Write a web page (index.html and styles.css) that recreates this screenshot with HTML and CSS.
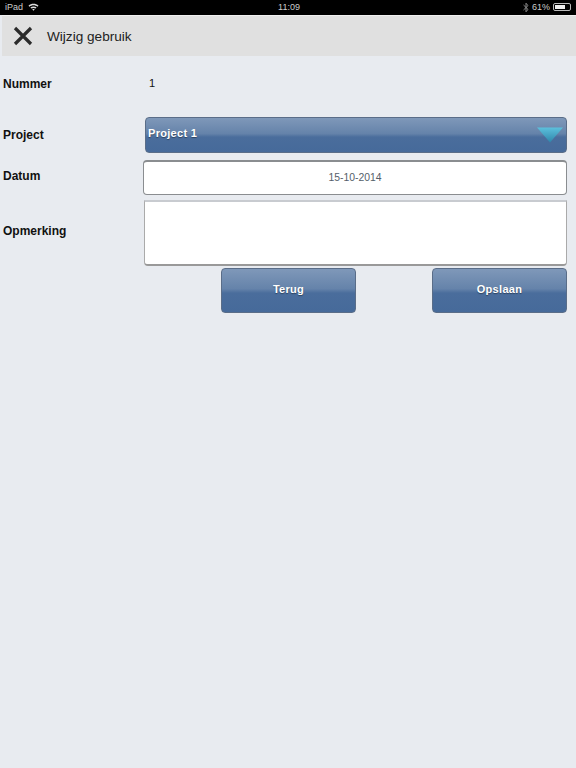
FILE: index.html
```html
<!DOCTYPE html>
<html lang="nl">

<head>
    <meta charset="UTF-8">
    <title>Wijzig gebruik</title>
    <link rel="stylesheet" href="styles.css">
</head>

<body>
    <div class="statusbar">
        <div class="status-left">
            <span>iPad</span>
            <svg class="wifi" width="11" height="8" viewBox="0 0 11 8">
                <path d="M0.5 2.8C3.2 0.2 7.8 0.2 10.5 2.8L9.5 3.8C7.3 1.8 3.7 1.8 1.5 3.8Z" fill="#ddd"/>
                <path d="M2.4 4.6C4 3.2 7 3.2 8.6 4.6L7.6 5.6C6.4 4.7 4.6 4.7 3.4 5.6Z" fill="#ddd"/>
                <path d="M4.3 6.4C5 5.9 6 5.9 6.7 6.4L5.5 7.8Z" fill="#ddd"/>
            </svg>
        </div>
        <div class="status-time">11:09</div>
        <div class="status-right">
            <svg class="bluetooth" width="6" height="11" viewBox="0 0 6 11">
                <path d="M0.5 3L5 7.4L3 9.8V1.2L5 3.6L0.5 8" fill="none" stroke="#888" stroke-width="1"/>
            </svg>
            <span>61%</span>
            <div class="battery"><div class="battery-level"></div></div>
        </div>
    </div>

    <div class="header">
        <svg class="close" width="20" height="20" viewBox="0 0 20 20">
            <path d="M2 2L18 18M18 2L2 18" stroke="#2b2b2b" stroke-width="3.2" fill="none"/>
        </svg>
        <h1 class="title">Wijzig gebruik</h1>
    </div>

    <div class="form">
        <div class="row row-number">
            <label class="label">Nummer</label>
            <div class="value">1</div>
        </div>
        <div class="row row-project">
            <label class="label">Project</label>
            <div class="select">
                <span>Project 1</span>
                <svg class="arrow" width="26" height="16" viewBox="0 0 26 16">
                    <defs>
                        <linearGradient id="arrowfill" x1="0" y1="0" x2="0" y2="1">
                            <stop offset="0" stop-color="#5cc0dc"/>
                            <stop offset="1" stop-color="#2f86ab"/>
                        </linearGradient>
                    </defs>
                    <path d="M0 0.5H26L13 15.5Z" fill="url(#arrowfill)"/>
                </svg>
            </div>
        </div>
        <div class="row row-date">
            <label class="label">Datum</label>
            <div class="input date">15-10-2014</div>
        </div>
        <div class="row row-note">
            <label class="label">Opmerking</label>
            <div class="textbox"></div>
        </div>
        <div class="buttons">
            <button class="btn">Terug</button>
            <button class="btn">Opslaan</button>
        </div>
    </div>
</body>

</html>
```

FILE: styles.css
```css
*{
    margin: 0;
    padding: 0;
    box-sizing: border-box;
}
body{
    width: 576px;
    height: 768px;
    overflow: hidden;
    background: #e8ebf0;
    font-family: "Liberation Sans", Arial, sans-serif;
    color: #111;
}
.statusbar{
    display: grid;
    grid-template-columns: 1fr auto 1fr;
    align-items: center;
    height: 15px;
    padding: 0 3px 1px 5px;
    background: #000;
    color: #ccc;
    font-size: 9px;
}
.status-left{
    display: flex;
    align-items: center;
    gap: 5px;
}
.status-right{
    display: flex;
    align-items: center;
    justify-content: flex-end;
    gap: 3px;
}
.battery{
    width: 18px;
    height: 8px;
    margin-right: 2px;
    padding: 1px;
    border: 1px solid #bbb;
    border-radius: 2px;
}
.battery-level{
    width: 10px;
    height: 100%;
    background: #eee;
}
.header{
    display: flex;
    align-items: center;
    gap: 14px;
    height: 41px;
    margin-left: 2px;
    padding-left: 11px;
    background: #e0e0e0;
    border-top: 1px solid #f0f0f0;
}
.title{
    font-size: 13.6px;
    font-weight: normal;
    color: #222;
}
.form{
    padding-right: 9px;
}
.row{
    display: flex;
}
.label{
    flex: none;
    width: 145px;
    padding-left: 3px;
    font-size: 12px;
    font-weight: bold;
    color: #111;
}
.row-number{
    height: 61px;
    padding-top: 21px;
}
.row-project{
    height: 43px;
    align-items: flex-start;
}
.row-project .label{
    padding-top: 11px;
}
.row-date{
    height: 40px;
}
.row-date .label{
    width: 143px;
    padding-top: 9px;
}
.row-note{
    height: 68px;
}
.row-note .label{
    width: 144px;
    padding-top: 24px;
}
.value{
    padding-left: 4px;
    font-size: 11px;
}
.select{
    flex: 1;
    display: flex;
    align-items: center;
    justify-content: space-between;
    height: 36px;
    padding: 0 3px 4px 2px;
    border: 1px solid #5a6d88;
    border-radius: 4px;
    background: linear-gradient(#7f98b9, #6583aa 46%, #4a6d9c 56%, #466a9a);
    color: #fff;
    font-size: 11px;
    font-weight: bold;
    letter-spacing: 0.3px;
    text-shadow: 0 1px 1px rgba(0, 0, 0, 0.4);
}
.arrow{
    margin-top: 4px;
}
.input{
    flex: 1;
    height: 35px;
    border: 1px solid #8a8d90;
    border-top-width: 2px;
    border-radius: 4px;
    background: #fff;
}
.date{
    line-height: 32px;
    text-align: center;
    font-size: 10.4px;
    color: #555e6a;
}
.textbox{
    flex: 1;
    height: 66px;
    border: 1px solid #aaa;
    border-top: 2px solid #c8cbd0;
    border-bottom: 2px solid #999;
    border-radius: 0 0 4px 4px;
    background: #fff;
}
.buttons{
    display: flex;
    justify-content: space-between;
    margin-left: 221px;
}
.btn{
    width: 135px;
    height: 45px;
    padding-bottom: 4px;
    border: 1px solid #5a6d88;
    border-radius: 4px;
    background: linear-gradient(#7f98b9, #6583aa 46%, #4a6d9c 56%, #466a9a);
    color: #fff;
    font-family: inherit;
    font-size: 11px;
    font-weight: bold;
    letter-spacing: 0.3px;
    text-shadow: 0 1px 1px rgba(0, 0, 0, 0.4);
}
```
